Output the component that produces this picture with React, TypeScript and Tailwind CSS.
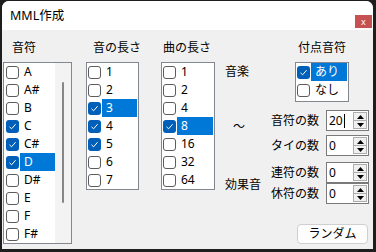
import React from "react";

type Item = { label: string; checked?: boolean; selected?: boolean };

const notes: Item[] = [
  { label: "A" },
  { label: "A#" },
  { label: "B" },
  { label: "C", checked: true },
  { label: "C#", checked: true },
  { label: "D", checked: true, selected: true },
  { label: "D#" },
  { label: "E" },
  { label: "F" },
  { label: "F#" },
];

const noteLengths: Item[] = [
  { label: "1" },
  { label: "2" },
  { label: "3", checked: true, selected: true },
  { label: "4", checked: true },
  { label: "5", checked: true },
  { label: "6" },
  { label: "7" },
];

const songLengths: Item[] = [
  { label: "1" },
  { label: "2" },
  { label: "4" },
  { label: "8", checked: true, selected: true },
  { label: "16" },
  { label: "32" },
  { label: "64" },
];

const dotted: Item[] = [
  { label: "あり", checked: true, selected: true },
  { label: "なし" },
];

function Box({ checked }: { checked?: boolean }) {
  if (checked) {
    return (
      <span className="flex h-[13px] w-[13px] shrink-0 items-center justify-center rounded-[3px] bg-[#005fb8]">
        <svg width="9" height="9" viewBox="0 0 9 9" fill="none">
          <path d="M1.5 4.8 L3.6 6.8 L7.6 2.2" stroke="white" strokeWidth="1" />
        </svg>
      </span>
    );
  }
  return <span className="h-[13px] w-[13px] shrink-0 rounded-[3px] border border-[#5c5c5c] bg-white" />;
}

function Row({ item, pad }: { item: Item; pad: string }) {
  return (
    <div className={`flex h-[18px] items-center ${pad}`}>
      <Box checked={item.checked} />
      <span
        className={`ml-[1px] flex h-full flex-1 items-center pl-[4px] ${
          item.selected ? "bg-[#0078d7] text-white" : "text-black"
        }`}
      >
        {item.label}
      </span>
    </div>
  );
}

function Spin({ value, caret }: { value: string; caret?: boolean }) {
  return (
    <div className="flex h-[21px] w-[43px] border border-[#7a7a7a] bg-white">
      <div className="flex flex-1 items-center pl-[2px] text-[12px]">
        {value}
        {caret && <span className="ml-[1px] h-[14px] w-[1px] bg-black" />}
      </div>
      <div className="my-[1px] mr-[1px] flex w-[14px] flex-col border border-[#adadad]">
        <div className="flex flex-1 items-center justify-center border-b border-[#adadad] bg-[#f0f0f0]">
          <svg width="7" height="4" viewBox="0 0 7 4">
            <path d="M0 4 L3.5 0 L7 4 Z" fill="#000" />
          </svg>
        </div>
        <div className="flex flex-1 items-center justify-center bg-[#f0f0f0]">
          <svg width="7" height="4" viewBox="0 0 7 4">
            <path d="M0 0 L3.5 4 L7 0 Z" fill="#000" />
          </svg>
        </div>
      </div>
    </div>
  );
}

function SpinRow({ label, value, caret, className }: { label: string; value: string; caret?: boolean; className: string }) {
  return (
    <div className={`flex items-center ${className}`}>
      <span className="w-[55px] leading-[16px]">{label}</span>
      <Spin value={value} caret={caret} />
    </div>
  );
}

export default function App() {
  return (
    <div className="h-[252px] w-[376px] overflow-hidden bg-[#1e1e1e] pl-[2px] pt-[1px] font-['Noto_Sans','Noto_Sans_CJK_JP',sans-serif] text-[12px] text-black">
      <div className="flex h-[248px] w-[371px] flex-col overflow-hidden rounded-t-[7px] bg-[#f0f0f0]">
        {/* title bar */}
        <div className="flex h-[29px] shrink-0 justify-between bg-white">
          <span className="self-center pl-[8px] pt-[1px] text-[12.5px] leading-[16px]">MML作成</span>
          <div className="mb-[2px] mr-[1px] flex h-[13px] w-[17px] items-center justify-center self-end bg-[#c75050] text-[9px] leading-none text-white">
            x
          </div>
        </div>

        {/* body */}
        <div className="flex flex-1 pt-[10px]">
          {/* 音符 */}
          <div className="ml-[1px] flex w-[69px] flex-col">
            <span className="h-[16px] pl-[9px] leading-[16px]">音符</span>
            <div className="mt-[6px] flex h-[182px] border border-[#828790] bg-white">
              <div className="flex w-[51px] flex-col">
                {notes.map((n) => (
                  <Row key={n.label} item={n} pad="pl-[2px]" />
                ))}
              </div>
              <div className="flex w-[16px] justify-center bg-[#f3f3f3] pt-[19px]">
                <div className="h-[121px] w-[2px] rounded-full bg-[#868686]" />
              </div>
            </div>
          </div>

          {/* 音の長さ */}
          <div className="ml-[14px] flex w-[53px] flex-col">
            <span className="h-[16px] whitespace-nowrap pl-[7px] leading-[16px]">音の長さ</span>
            <div className="mt-[6px] flex h-[128px] flex-col border border-[#828790] bg-white pr-[1px]">
              {noteLengths.map((n) => (
                <Row key={n.label} item={n} pad="pl-[1px]" />
              ))}
            </div>
          </div>

          {/* 曲の長さ */}
          <div className="ml-[22px] flex w-[54px] flex-col">
            <span className="h-[16px] whitespace-nowrap pl-[2px] leading-[16px]">曲の長さ</span>
            <div className="mt-[6px] flex h-[128px] flex-col border border-[#828790] bg-white pr-[1px]">
              {songLengths.map((n) => (
                <Row key={n.label} item={n} pad="pl-[1px]" />
              ))}
            </div>
          </div>

          {/* 音楽 / 効果音 */}
          <div className="ml-[10px] flex w-[46px] flex-col">
            <span className="mt-[24px] h-[16px] leading-[16px]">音楽</span>
            <span className="mt-[39px] h-[16px] pl-[8px] leading-[16px]">～</span>
            <span className="mt-[42px] h-[16px] leading-[16px]">効果音</span>
          </div>

          {/* 付点音符 + counts */}
          <div className="flex w-[98px] flex-col">
            <span className="h-[16px] pl-[27px] leading-[16px]">付点音符</span>
            <div className="ml-[24px] mt-[6px] flex h-[40px] w-[54px] flex-col border border-[#828790] bg-white pr-[1px]">
              {dotted.map((n) => (
                <Row key={n.label} item={n} pad="pl-[1px]" />
              ))}
            </div>
            <SpinRow label="音符の数" value="20" caret className="mt-[8px]" />
            <SpinRow label="タイの数" value="0" className="mt-[4px]" />
            <SpinRow label="連符の数" value="0" className="mt-[6px]" />
            <SpinRow label="休符の数" value="0" className="mt-0" />
            <button className="ml-[26px] mt-[20px] h-[20px] w-[71px] rounded-[4px] border border-[#d0d0d0] bg-[#fdfdfd] text-[12px] leading-none">
              ランダム
            </button>
          </div>
        </div>
      </div>
    </div>
  );
}
